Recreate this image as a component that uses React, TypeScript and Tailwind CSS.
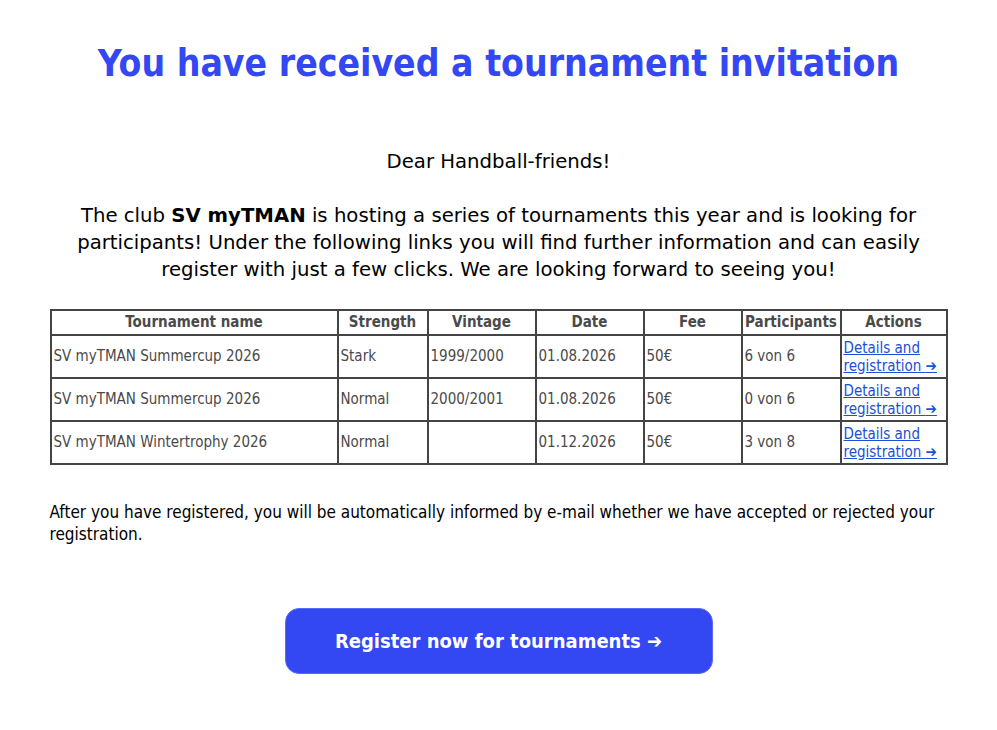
const rows = [
  { name: "SV myTMAN Summercup 2026", strength: "Stark", vintage: "1999/2000", date: "01.08.2026", fee: "50€", participants: "6 von 6" },
  { name: "SV myTMAN Summercup 2026", strength: "Normal", vintage: "2000/2001", date: "01.08.2026", fee: "50€", participants: "0 von 6" },
  { name: "SV myTMAN Wintertrophy 2026", strength: "Normal", vintage: "", date: "01.12.2026", fee: "50€", participants: "3 von 8" },
]

const cond = "font-['Tahoma','DejaVu_Sans_Condensed','DejaVu_Sans',sans-serif]"
const wide = "font-['Tahoma','DejaVu_Sans',sans-serif]"
const cell = "border-2 border-[#444] px-[2px]"

export default function App() {
  return (
    <div className={`min-h-screen bg-white ${cond}`}>
      <div className="mx-auto w-[898px] pt-[40px] pb-12">
        <h1 className="text-center text-[37px] font-bold leading-[48px] text-[#3347f2]">
          You have received a tournament invitation
        </h1>

        <div className={`mt-[60px] text-center text-[19.7px] leading-[27px] text-black ${wide}`}>
          <p>Dear Handball-friends!</p>
          <p className="mt-[27px]">
            The club <b>SV myTMAN</b> is hosting a series of tournaments this year and is looking for
            <br />
            participants! Under the following links you will find further information and can easily
            <br />
            register with just a few clicks. We are looking forward to seeing you!
          </p>
        </div>

        <table className="mt-[26px] w-full border-collapse border-2 border-[#444] text-[15px] text-[#4a4a4a]">
          <thead>
            <tr className="h-[25px]">
              <th className="w-[287px] border-2 border-[#444] font-bold">Tournament name</th>
              <th className="w-[90px] border-2 border-[#444] font-bold">Strength</th>
              <th className="w-[108px] border-2 border-[#444] font-bold">Vintage</th>
              <th className="w-[108px] border-2 border-[#444] font-bold">Date</th>
              <th className="w-[98px] border-2 border-[#444] font-bold">Fee</th>
              <th className="w-[99px] border-2 border-[#444] font-bold">Participants</th>
              <th className="border-2 border-[#444] font-bold">Actions</th>
            </tr>
          </thead>
          <tbody>
            {rows.map((r, i) => (
              <tr key={i} className="h-[43px]">
                <td className={cell}>{r.name}</td>
                <td className={cell}>{r.strength}</td>
                <td className={cell}>{r.vintage}</td>
                <td className={cell}>{r.date}</td>
                <td className={cell}>{r.fee}</td>
                <td className={cell}>{r.participants}</td>
                <td className={`${cell} leading-[18px]`}>
                  <a href="#" className="text-[#1a4fd6] underline">
                    Details and registration <span className="font-bold">➔</span>
                  </a>
                </td>
              </tr>
            ))}
          </tbody>
        </table>

        <p className="mt-[36px] text-[17px] leading-[22px] text-black">
          After you have registered, you will be automatically informed by e-mail whether we have accepted or rejected
          your registration.
        </p>

        <div className="mt-[63px] flex justify-center">
          <a
            href="#"
            className="flex h-[66px] w-[428px] items-center justify-center rounded-[14px] border border-[#5a6cf7] bg-[#3347f2] text-[20px] font-bold text-white"
          >
            Register now for tournaments ➔
          </a>
        </div>
      </div>
    </div>
  )
}
